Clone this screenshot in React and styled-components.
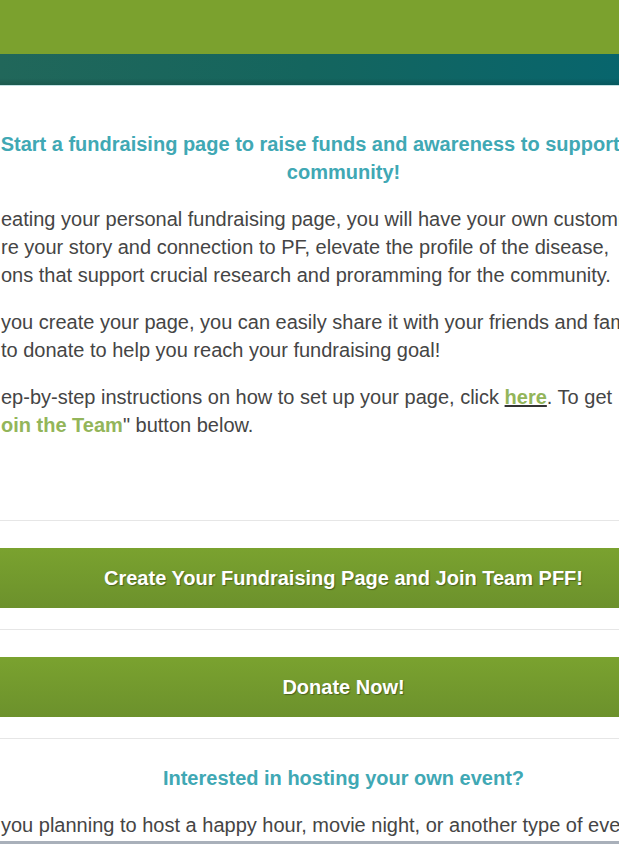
import React from "react";
import styled, { createGlobalStyle } from "styled-components";

const Global = createGlobalStyle`
  html, body {
    margin: 0;
    padding: 0;
    background: #fff;
    overflow: hidden;
  }
  body {
    font-family: "Liberation Sans", Arial, sans-serif;
    color: #444;
  }
`;

const Page = styled.div`
  width: 687px;
  height: 844px;
  display: flex;
  flex-direction: column;
`;

const Header = styled.header`
  width: 100%;
  display: flex;
  flex-direction: column;
`;

const GreenBand = styled.div`
  height: 54px;
  background: #7ba12e;
`;

const TealBand = styled.div`
  height: 31px;
  background:
    linear-gradient(180deg, rgba(0, 0, 0, 0) 0%, rgba(0, 0, 0, 0) 78%, rgba(0, 0, 0, 0.14) 100%),
    linear-gradient(90deg, #21675a 0%, #14655e 45%, #056570 100%);
  border-bottom: 1px solid #c3e2e4;
`;

const Content = styled.main`
  display: flex;
  flex-direction: column;
  padding-top: 44px;
`;

const Heading = styled.h2`
  margin: ${(p) => (p.$gap ? `${p.$gap}px` : 0)} 0 0;
  font-size: 20px;
  line-height: 28px;
  font-weight: bold;
  color: #40a8b4;
  text-align: center;
  white-space: nowrap;
`;

const Text = styled.p`
  margin: 19px 0 0;
  font-size: 20px;
  line-height: 28px;
  color: #454545;
  white-space: nowrap;
  padding-left: 1px;
`;

const Strong = styled.b`
  color: #93b55a;
`;

const Here = styled.a`
  color: #93b55a;
  font-weight: bold;
  text-decoration: underline;
  text-decoration-color: #333;
`;

const Rule = styled.hr`
  margin: ${(p) => p.$gap || 0}px 0 0;
  border: 0;
  border-top: 1px solid #e6e6e6;
  width: 100%;
`;

const Button = styled.a`
  display: flex;
  align-items: center;
  justify-content: center;
  height: 60px;
  margin: 27px 0 21px;
  background: linear-gradient(180deg, #7aa22f 0%, #6c912c 100%);
  color: #fff;
  font-size: 20px;
  font-weight: bold;
  text-decoration: none;
  text-shadow: 1px 1px 1px rgba(0, 0, 0, 0.35);
`;

const BottomEdge = styled.div`
  margin-top: auto;
  height: 3px;
  background: #a9b0ba;
`;

const App = () => {
  return (
    <>
      <Global />
      <Page>
        <Header>
          <GreenBand />
          <TealBand />
        </Header>
        <Content>
          <Heading>
            Start a fundraising page to raise funds and awareness to support the PF
            <br />
            community!
          </Heading>
          <Text>
            eating your personal fundraising page, you will have your own customized
            <br />
            re your story and connection to PF, elevate the profile of the disease,
            <br />
            ons that support crucial research and proramming for the community.
          </Text>
          <Text>
            you create your page, you can easily share it with your friends and family
            <br />
            to donate to help you reach your fundraising goal!
          </Text>
          <Text>
            ep-by-step instructions on how to set up your page, click <Here href="#">here</Here>. To get
            <br />
            <Strong>oin the Team</Strong>" button below.
          </Text>
          <Rule $gap={81} />
          <Button href="#">Create Your Fundraising Page and Join Team PFF!</Button>
          <Rule />
          <Button href="#">Donate Now!</Button>
          <Rule />
          <Heading $gap={25}>Interested in hosting your own event?</Heading>
          <Text>you planning to host a happy hour, movie night, or another type of event</Text>
        </Content>
        <BottomEdge />
      </Page>
    </>
  );
};

export default App;
